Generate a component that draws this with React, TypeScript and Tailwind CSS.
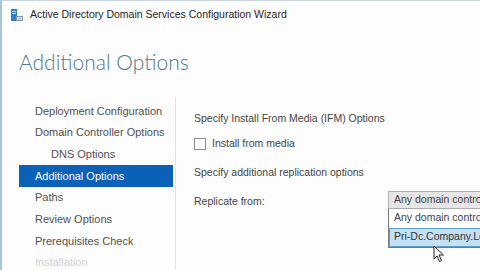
const steps = [
  { label: "Deployment Configuration" },
  { label: "Domain Controller Options" },
  { label: "DNS Options", indent: true },
  { label: "Additional Options", active: true },
  { label: "Paths" },
  { label: "Review Options" },
  { label: "Prerequisites Check" },
  { label: "Installation", disabled: true },
];

function WizardIcon() {
  return (
    <svg width="14" height="14" viewBox="0 0 14 14">
      <rect x="1" y="1" width="6" height="12" fill="#2f7fc8" />
      <rect x="2" y="3" width="4" height="1" fill="#cfe3f6" />
      <rect x="2" y="5" width="4" height="1" fill="#cfe3f6" />
      <rect x="6" y="8" width="7" height="5" fill="#8a9aa8" />
      <rect x="7" y="9" width="5" height="3" fill="#c9d3dc" />
    </svg>
  );
}

function Cursor() {
  return (
    <svg width="12" height="18" viewBox="0 0 12 18" className="absolute left-[431px] top-[244px]">
      <path d="M1 1 L1 14 L4 11 L6.5 16.5 L8.5 15.5 L6 10 L10.5 10 Z" fill="#fff" stroke="#222" strokeWidth="1" strokeLinejoin="round" />
    </svg>
  );
}

export default function App() {
  return (
    <div className="relative w-[480px] h-[270px] overflow-hidden bg-[#fdfdfd] border-l-2 border-t border-l-[#a8c4dc] border-t-[#c8d3dc] font-['Liberation_Sans',sans-serif] text-[#333]">
      {/* Title bar */}
      <div className="h-[27px] flex items-center gap-[6px] pl-[8px]">
        <WizardIcon />
        <span className="text-[10.5px] text-[#1e1e1e]">
          Active Directory Domain Services Configuration Wizard
        </span>
      </div>

      {/* Heading */}
      <div className="h-[69px] pt-[19px] pl-[17px]">
        <h1 className="font-['Lato',sans-serif] font-light text-[21px] leading-[30px] text-[#51788c]">
          Additional Options
        </h1>
      </div>

      <div className="flex">
        {/* Steps */}
        <div className="w-[174px] shrink-0 pl-[17px] pr-[2px] pt-[3px] border-r border-[#e3e3e3] h-[200px]">
          {steps.map((s) => (
            <div
              key={s.label}
              className={
                "w-[154px] h-[21.7px] flex items-center whitespace-nowrap text-[11px] " +
                (s.active
                  ? "bg-[#0a62b8] text-white"
                  : s.disabled
                  ? "text-[#d0d0d0]"
                  : "text-[#505050]") +
                (s.indent ? " pl-[32px]" : " pl-[16px]")
              }
            >
              {s.label}
            </div>
          ))}
        </div>

        {/* Content */}
        <div className="flex-1 min-w-0 pl-[18px] pt-[15px] text-[10.5px] text-[#444]">
          <div className="h-[14px] flex items-center whitespace-nowrap">
            Specify Install From Media (IFM) Options
          </div>
          <div className="mt-[10px] flex items-center gap-[6px]">
            <div className="w-[12px] h-[12px] border border-[#8a8a8a] bg-white" />
            <span>Install from media</span>
          </div>
          <div className="mt-[14px] h-[14px] flex items-center whitespace-nowrap">
            Specify additional replication options
          </div>
          <div className="mt-[11px] flex">
            <div className="w-[194px] shrink-0 pt-[3px] whitespace-nowrap">Replicate from:</div>
            <div className="w-[200px] shrink-0">
              <div className="h-[18px] border border-[#adadad] bg-[#e6e6e6] flex items-center pl-[5px] whitespace-nowrap overflow-hidden">
                Any domain controller
              </div>
              <div className="border border-[#7a7a7a] border-t-0 bg-white">
                <div className="h-[19px] flex items-center pl-[5px] whitespace-nowrap overflow-hidden">
                  Any domain controller
                </div>
                <div className="h-[19px] flex items-center pl-[4px] whitespace-nowrap overflow-hidden bg-[#c3e0f4] border border-[#5a9ed8] text-[#333]">
                  Pri-Dc.Company.Local
                </div>
              </div>
            </div>
          </div>
        </div>
      </div>
      <Cursor />
    </div>
  );
}
